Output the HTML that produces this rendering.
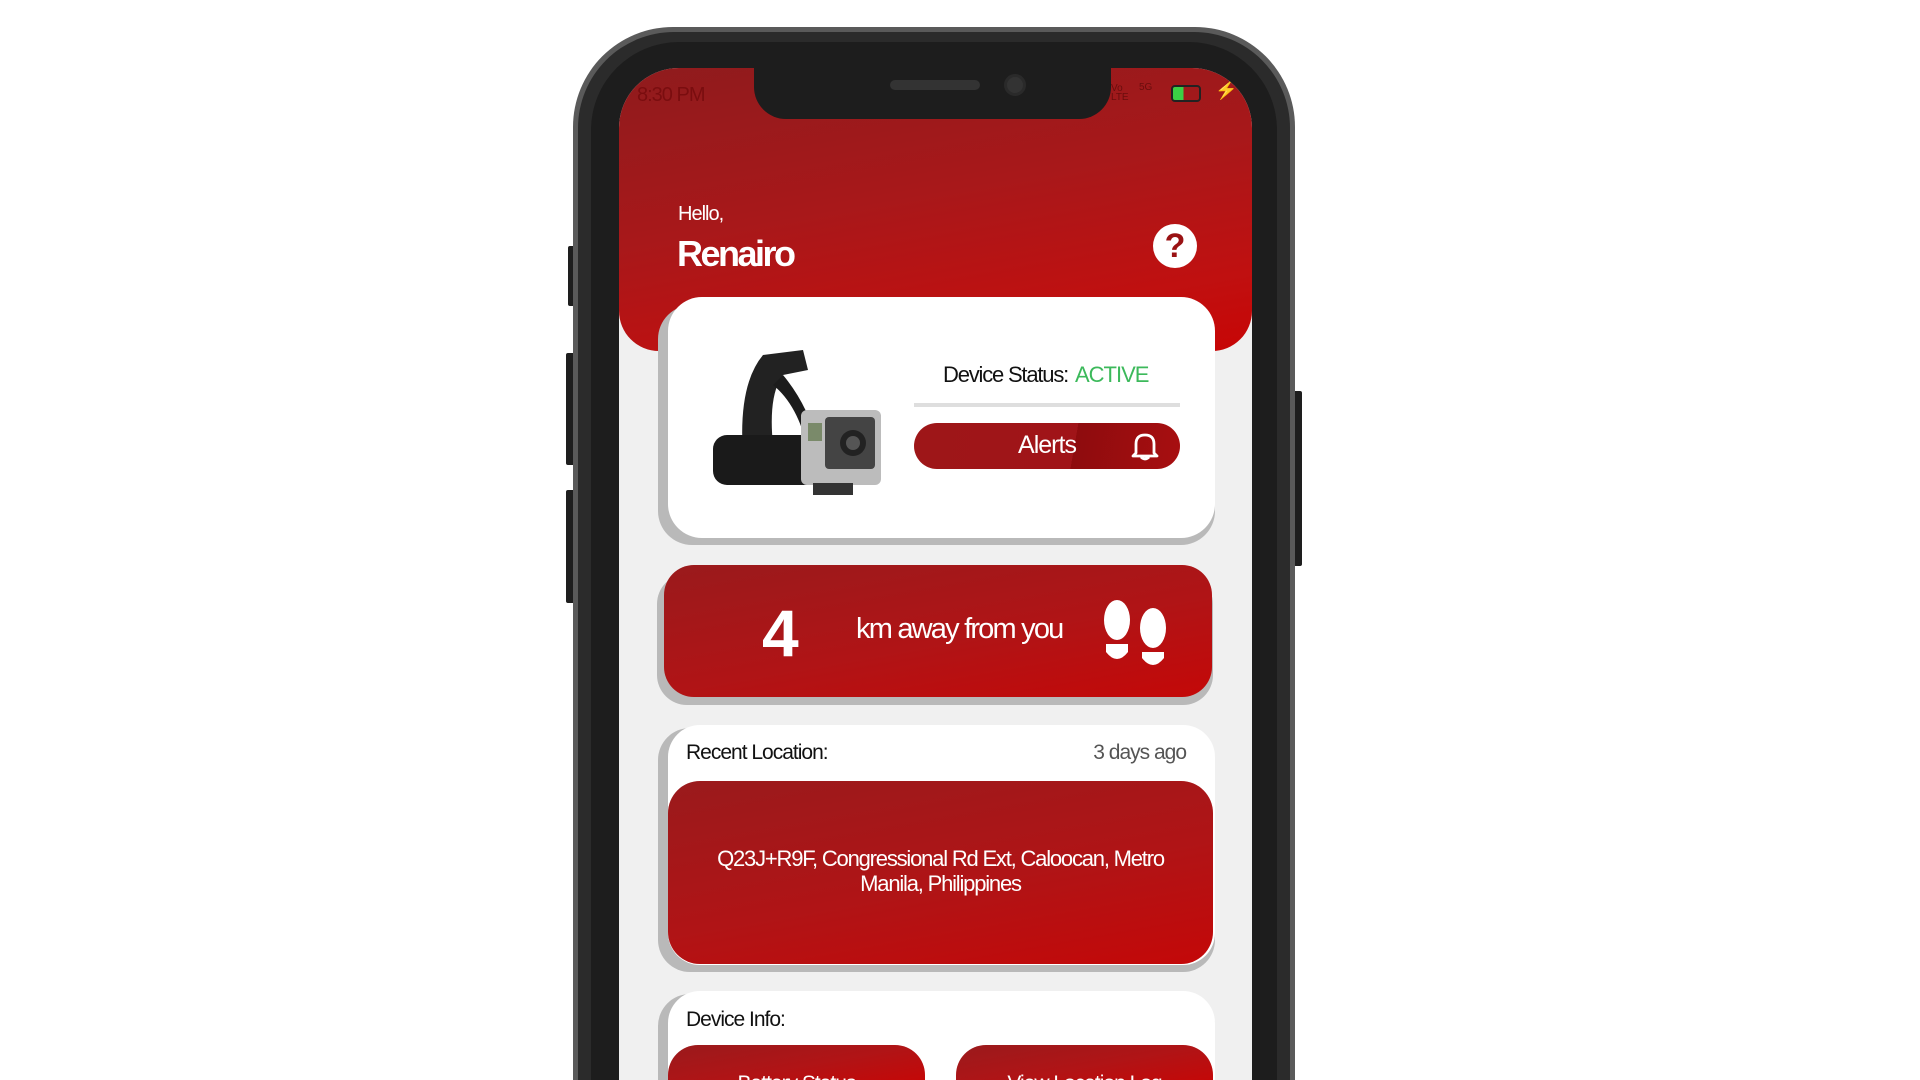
<!DOCTYPE html>
<html><head><meta charset="utf-8"><style>
*{margin:0;padding:0;box-sizing:border-box}
html,body{width:1920px;height:1080px;overflow:hidden;background:#fff}
#w{position:relative;width:1920px;height:1080px;overflow:hidden;background:#fff;font-family:"Liberation Sans Narrow","Liberation Sans",sans-serif}
#in{position:absolute;left:-3px;top:0;width:1920px;height:1080px}
.abs{position:absolute}
.red{background:linear-gradient(170deg,#9a1a1c 0%,#b01416 55%,#c40808 100%)}
</style></head><body><div id="w"><div id="in">
<div class="abs" style="left:571px;top:246px;width:8px;height:60px;background:#1e1e1e;border-radius:2px"></div>
<div class="abs" style="left:569px;top:353px;width:10px;height:112px;background:#1e1e1e;border-radius:2px"></div>
<div class="abs" style="left:569px;top:490px;width:10px;height:113px;background:#1e1e1e;border-radius:2px"></div>
<div class="abs" style="left:1294px;top:391px;width:11px;height:175px;background:#1e1e1e;border-radius:2px"></div>
<div class="abs" style="left:576px;top:27px;width:722px;height:1053px;border-radius:100px 100px 0 0;background:#5a5a5a"></div>
<div class="abs" style="left:581px;top:32px;width:712px;height:1048px;border-radius:96px 96px 0 0;background:#2b2b2b"></div>
<div class="abs" style="left:594px;top:42px;width:686px;height:1038px;border-radius:88px 88px 0 0;background:#1d1d1d"></div>
<div class="abs" style="left:622px;top:68px;width:633px;height:1012px;border-radius:60px 60px 0 0;background:#f0f0f0;overflow:hidden">
  <div class="abs" style="left:0;top:0;width:633px;height:283px;border-radius:0 0 40px 40px;background:linear-gradient(170deg,#8f1b1d 0%,#a8181a 45%,#c01010 80%,#c70505 100%)"></div>
  <div class="abs" style="left:18px;top:16px;font-size:20px;color:#7a0d0f;font-family:'Liberation Sans',sans-serif;letter-spacing:-1px">8:30 PM</div>
  <div class="abs" style="left:492px;top:16px;font-size:10px;color:#6a0d0d;line-height:9px">Vo<br>LTE</div>
  <div class="abs" style="left:520px;top:14px;font-size:10px;color:#6a0d0d">5G</div>
  <div class="abs" style="left:552px;top:17px;width:30px;height:17px;border:2px solid #222;border-radius:4px;background:linear-gradient(90deg,#3bd045 40%,transparent 40%)"></div>
  <div class="abs" style="left:596px;top:12px;color:#3bd045;font-size:18px">⚡</div>
  <div class="abs" style="left:59px;top:135px;font-size:20px;color:#fff;letter-spacing:-1px">Hello,</div>
  <div class="abs" style="left:58px;top:165px;font-size:36px;color:#fff;font-weight:bold;letter-spacing:-2.5px">Renairo</div>
  <div class="abs" style="left:534px;top:156px;width:44px;height:44px;border-radius:50%;background:#fff;color:#9a1214;font-size:34px;font-weight:bold;text-align:center;line-height:44px;font-family:'Liberation Sans',sans-serif">?</div>
</div>
<div class="abs" style="left:757px;top:60px;width:357px;height:59px;background:#1d1d1d;border-radius:0 0 32px 32px"></div>
<div class="abs" style="left:893px;top:80px;width:90px;height:10px;background:#333;border-radius:5px"></div>
<div class="abs" style="left:1007px;top:74px;width:22px;height:22px;background:#333;border-radius:50%;border:3px solid #2a2a2a"></div>

<div class="abs" style="left:661px;top:305px;width:557px;height:240px;border-radius:34px;background:#b9b9b9"></div>
<div class="abs" style="left:671px;top:297px;width:547px;height:241px;border-radius:34px;background:#fff"></div>
<svg class="abs" style="left:716px;top:345px" width="175" height="150" viewBox="0 0 175 150">
  <path d="M30 110 Q25 40 50 10 L90 5 L95 25 L70 30 Q55 50 60 100" fill="#222"/>
  <path d="M70 30 Q95 60 105 100 L95 105 Q85 60 60 40Z" fill="#1c1c1c"/>
  <rect x="0" y="90" width="110" height="50" rx="14" fill="#1a1a1a"/>
  <rect x="88" y="65" width="80" height="75" rx="6" fill="#bcbcbc"/>
  <rect x="112" y="72" width="50" height="52" rx="4" fill="#444"/>
  <circle cx="140" cy="98" r="13" fill="#222"/><circle cx="140" cy="98" r="7" fill="#555"/>
  <rect x="95" y="78" width="14" height="18" fill="#7a8a6a"/>
  <rect x="100" y="138" width="40" height="12" fill="#333"/>
</svg>
<div class="abs" style="left:946px;top:362px;font-size:22px;color:#111;letter-spacing:-1.2px">Device Status:</div>
<div class="abs" style="left:1078px;top:362px;font-size:22px;color:#3cb95b;letter-spacing:-1px">ACTIVE</div>
<div class="abs" style="left:917px;top:403px;width:266px;height:4px;background:#dedede"></div>
<div class="abs" style="left:917px;top:423px;width:266px;height:46px;border-radius:23px;background:linear-gradient(100deg,#9e1618 0%,#a01418 60%,#8e0c0e 60%,#a80e10 100%)"></div>
<div class="abs" style="left:917px;top:431px;width:266px;text-align:center;font-size:25px;color:#fff;letter-spacing:-1px">Alerts</div>
<svg class="abs" style="left:1134px;top:431px" width="28" height="30" viewBox="0 0 28 30"><path d="M5 22 L5 13 Q5 4 14 4 Q23 4 23 13 L23 22 L26 25 L2 25Z M10 26 Q14 30 18 26" fill="none" stroke="#fff" stroke-width="2.8" stroke-linejoin="round"/></svg>

<div class="abs" style="left:660px;top:574px;width:556px;height:131px;border-radius:30px;background:#b9b9b9"></div>
<div class="abs red" style="left:667px;top:565px;width:548px;height:132px;border-radius:30px"></div>
<div class="abs" style="left:765px;top:595px;font-size:66px;color:#fff;font-weight:bold">4</div>
<div class="abs" style="left:859px;top:613px;font-size:29px;color:#fff;letter-spacing:-1.8px">km away from you</div>
<svg class="abs" style="left:1105px;top:600px" width="68" height="68" viewBox="0 0 68 68">
  <ellipse cx="15" cy="20" rx="13" ry="20" fill="#fff"/><path d="M4 44 h22 v8 q-11 14 -22 0z" fill="#fff"/>
  <ellipse cx="51" cy="28" rx="13" ry="20" fill="#fff"/><path d="M40 52 h22 v6 q-11 14 -22 0z" fill="#fff"/>
</svg>

<div class="abs" style="left:661px;top:728px;width:557px;height:244px;border-radius:32px;background:#b9b9b9"></div>
<div class="abs" style="left:671px;top:725px;width:547px;height:240px;border-radius:32px;background:#fff"></div>
<div class="abs" style="left:689px;top:741px;font-size:21px;color:#111;letter-spacing:-1px">Recent Location:</div>
<div class="abs" style="left:1060px;top:741px;width:129px;text-align:right;font-size:21px;color:#555;letter-spacing:-1px">3 days ago</div>
<div class="abs red" style="left:671px;top:781px;width:545px;height:183px;border-radius:32px"></div>
<div class="abs" style="left:671px;top:846px;width:545px;text-align:center;font-size:22px;line-height:25px;color:#fff;padding:0 40px;letter-spacing:-1.2px">Q23J+R9F, Congressional Rd Ext, Caloocan, Metro Manila, Philippines</div>

<div class="abs" style="left:661px;top:994px;width:557px;height:86px;border-radius:32px 32px 0 0;background:#b9b9b9"></div>
<div class="abs" style="left:671px;top:991px;width:547px;height:89px;border-radius:32px 32px 0 0;background:#fff"></div>
<div class="abs" style="left:689px;top:1008px;font-size:21px;color:#111;letter-spacing:-1px">Device Info:</div>
<div class="abs red" style="left:671px;top:1045px;width:257px;height:35px;border-radius:30px 30px 0 0"></div>
<div class="abs red" style="left:959px;top:1045px;width:257px;height:35px;border-radius:30px 30px 0 0"></div>
<div class="abs" style="left:671px;top:1072px;width:257px;height:8px;overflow:hidden;text-align:center;font-size:21px;line-height:24px;color:#fff;letter-spacing:-1px">Battery Status</div>
<div class="abs" style="left:959px;top:1072px;width:257px;height:8px;overflow:hidden;text-align:center;font-size:21px;line-height:24px;color:#fff;letter-spacing:-1px">View Location Log</div>
</div></div></body></html>
